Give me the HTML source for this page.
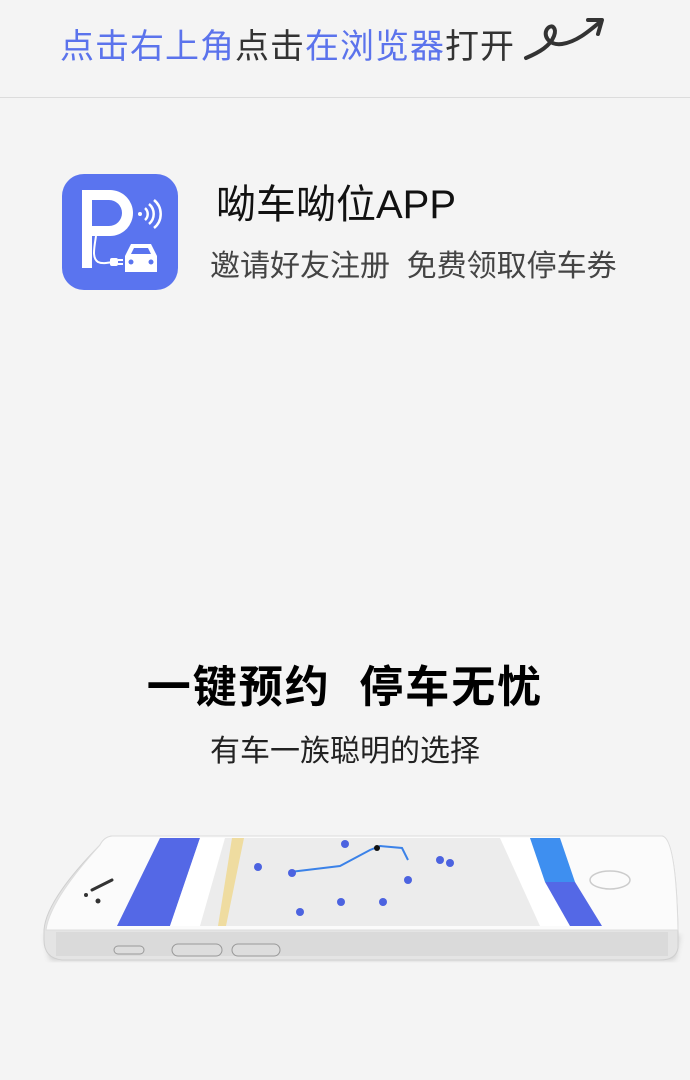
<!DOCTYPE html>
<html><head><meta charset="utf-8"><style>
html,body{margin:0;padding:0;}
body{width:690px;height:1080px;background:#f4f4f4;position:relative;overflow:hidden;font-family:"Liberation Sans","Noto Sans CJK SC",sans-serif;}
.top{position:absolute;left:0;top:0;width:690px;height:97px;border-bottom:1px solid #dcdcdc;}
.tip{position:absolute;left:60px;top:22px;font-size:34px;line-height:50px;color:#333;white-space:nowrap;letter-spacing:1px}
.b{color:#5b73ec}
.icon{position:absolute;left:62px;top:174px;width:116px;height:116px;border-radius:22px;background:#5a74ef;}
.t1{position:absolute;left:216px;top:180px;font-size:40px;line-height:50px;color:#111;}
.t2{position:absolute;left:210px;top:246px;font-size:30px;line-height:42px;color:#444;white-space:nowrap}
.h1{position:absolute;left:0;width:690px;top:658px;text-align:center;font-size:44px;font-weight:bold;line-height:60px;color:#000;letter-spacing:2px;}
.h2{position:absolute;left:0;width:690px;top:731px;text-align:center;font-size:30px;line-height:42px;color:#222;}
</style></head><body>
<div class="top"></div>
<div class="tip"><span class="b">点击右上角</span>点击<span class="b">在浏览器</span>打开</div>
<svg style="position:absolute;left:520px;top:14px" width="90" height="50" viewBox="0 0 90 50">
<path d="M6 44 C20 38 30 32 34 22 C37 14 32 10 28 14 C22 20 28 32 42 30 C56 28 68 18 80 8" fill="none" stroke="#333" stroke-width="4" stroke-linecap="round"/>
<path d="M68 6 L82 6 L78 20" fill="none" stroke="#333" stroke-width="4" stroke-linecap="round" stroke-linejoin="round"/>
</svg>
<div class="icon"><svg width="116" height="116" viewBox="0 0 116 116">
<path fill-rule="evenodd" fill="#fff" d="M20 16 H48 A23 23 0 0 1 48 62 H30 V94 H20 Z M30 26 H47 A13 13 0 0 1 47 52 H30 Z"/>
<circle cx="78" cy="40" r="2" fill="#fff"/>
<path d="M83 34 A8 8 0 0 1 83 46 M87 30 A13 13 0 0 1 87 50 M92 26 A18 18 0 0 1 92 54" fill="none" stroke="#fff" stroke-width="2.5"/>
<path d="M34 62 C32 75 30 84 36 88 C40 90 45 89 50 88" fill="none" stroke="#fff" stroke-width="2"/>
<rect x="48" y="84" width="8" height="8" rx="2" fill="#fff"/>
<path d="M56 86 H61 M56 90 H61" stroke="#fff" stroke-width="2"/>
<path d="M63 98 V82 L69 70 H89 L95 82 V98 Z" fill="#fff"/>
<path d="M69 80 L72 74 H86 L89 80 Z" fill="#5a74ef"/>
<circle cx="69" cy="88" r="2.5" fill="#5a74ef"/><circle cx="89" cy="88" r="2.5" fill="#5a74ef"/>
</svg></div>
<div class="t1">呦车呦位APP</div>
<div class="t2">邀请好友注册&nbsp;&nbsp;免费领取停车券</div>
<div class="h1">一键预约&nbsp;&nbsp;停车无忧</div>
<div class="h2">有车一族聪明的选择</div>
<svg style="position:absolute;left:0;top:820px" width="690" height="160" viewBox="0 820 690 160">
<defs><filter id="s"><feGaussianBlur stdDeviation="3"/></filter></defs>
<path d="M50 960 L675 960 L680 935 L45 935 Z" fill="#ccc" filter="url(#s)"/>
<path d="M112 836 L662 836 Q676 838 678 930 L678 948 Q676 960 660 960 L62 960 Q44 958 44 940 L44 930 Q46 900 100 845 Q104 837 112 836 Z" fill="#e4e4e4" stroke="#cfcfcf"/>
<path d="M112 836 L662 836 Q676 838 678 930 L46 930 Q50 900 100 845 Q104 837 112 836 Z" fill="#fbfbfb" stroke="#ddd"/>
<rect x="56" y="932" width="612" height="24" fill="#dadada"/>
<polygon points="160,838 545,838 600,926 117,926" fill="#ececec"/>
<polygon points="160,838 200,838 170,926 117,926" fill="#5468e6"/>
<polygon points="200,838 225,838 200,926 170,926" fill="#fff"/>
<polygon points="500,838 530,838 570,926 540,926" fill="#fff"/>
<polygon points="530,838 560,838 575,882 545,882" fill="#3e8ff0"/>
<polygon points="545,882 575,882 602,926 570,926" fill="#5468e6"/>
<polygon points="232,838 244,838 226,926 218,926" fill="#efdca0"/>
<path d="M290 872 L340 866 L370 850 L380 846 L402 848 L408 860" fill="none" stroke="#3b82e8" stroke-width="2"/>
<g fill="#4c63e0"><circle cx="258" cy="867" r="4"/><circle cx="345" cy="844" r="4"/><circle cx="292" cy="873" r="4"/><circle cx="341" cy="902" r="4"/><circle cx="383" cy="902" r="4"/><circle cx="300" cy="912" r="4"/><circle cx="408" cy="880" r="4"/><circle cx="440" cy="860" r="4"/><circle cx="450" cy="863" r="4"/></g>
<circle cx="377" cy="848" r="3" fill="#111"/>
<ellipse cx="610" cy="880" rx="20" ry="9" fill="none" stroke="#ccc" stroke-width="1.5"/>
<rect x="114" y="946" width="30" height="8" rx="4" fill="#ddd" stroke="#999"/>
<rect x="172" y="944" width="50" height="12" rx="6" fill="#ddd" stroke="#999"/>
<rect x="232" y="944" width="48" height="12" rx="6" fill="#ddd" stroke="#999"/>
<circle cx="86" cy="895" r="2" fill="#333"/><circle cx="98" cy="901" r="2.5" fill="#333"/>
<path d="M92 890 L112 880" stroke="#333" stroke-width="3" stroke-linecap="round"/>
</svg>
</body></html>
